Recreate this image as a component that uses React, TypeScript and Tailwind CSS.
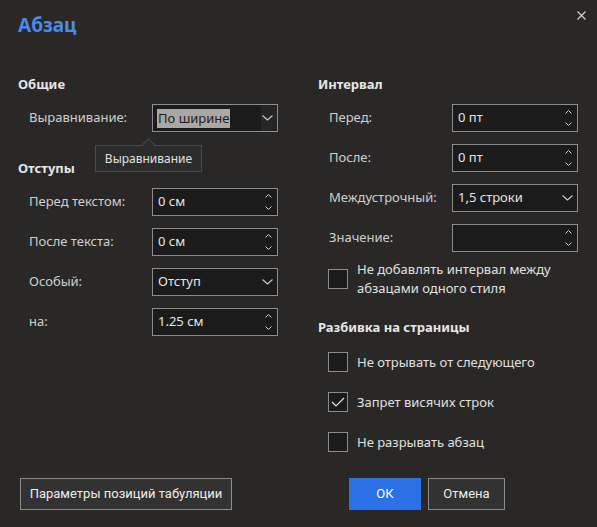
import React from "react";

const font = { fontFamily: '"Noto Sans", "Open Sans", sans-serif' };
const btnFont = { fontFamily: 'Roboto, "Noto Sans", sans-serif' };

function Chevron() {
  return (
    <svg width="11" height="6" viewBox="0 0 11 6" className="text-[#cfcfcf]">
      <path d="M0.5 0.5 L5.5 5 L10.5 0.5" fill="none" stroke="currentColor" strokeWidth="1.1" />
    </svg>
  );
}

function Spinner() {
  return (
    <div className="flex h-full flex-col justify-between py-[5px] pr-[5px] text-[#cfcfcf]">
      <svg width="7" height="4" viewBox="0 0 7 4">
        <path d="M0.5 3.5 L3.5 0.5 L6.5 3.5" fill="none" stroke="currentColor" strokeWidth="1" />
      </svg>
      <svg width="7" height="4" viewBox="0 0 7 4">
        <path d="M0.5 0.5 L3.5 3.5 L6.5 0.5" fill="none" stroke="currentColor" strokeWidth="1" />
      </svg>
    </div>
  );
}

function SpinField({ value }: { value: string }) {
  return (
    <div className="flex h-[28px] w-[126px] items-stretch border border-[#8c8c8c] bg-[#1c1b1b]">
      <div className="flex flex-1 items-center pl-[5px] text-[13px] text-[#e4e4e4]">{value}</div>
      <Spinner />
    </div>
  );
}

function SelectField({ value, focused }: { value: string; focused?: boolean }) {
  return (
    <div className="flex h-[28px] w-[126px] items-stretch border border-[#8c8c8c] bg-[#1c1b1b]">
      <div className="flex flex-1 items-center pl-[4px] text-[13px]">
        {focused ? (
          <span className="bg-[#aaa7a4] px-[1px] leading-[19px] text-[#1e1e1e]">{value}</span>
        ) : (
          <span className="pl-[1px] text-[#e4e4e4]">{value}</span>
        )}
      </div>
      <div className={`flex w-[16px] items-center justify-center pr-[3px] ${focused ? "bg-[#252525]" : ""}`}>
        <Chevron />
      </div>
    </div>
  );
}

function Row({ label, children }: { label: string; children: React.ReactNode }) {
  return (
    <div className="flex h-[28px] items-center">
      <div className="w-[134px] pl-[11px] text-[13px] text-[#cfcfcf]">{label}</div>
      {children}
    </div>
  );
}

function Header({ children }: { children: React.ReactNode }) {
  return <div className="flex h-[20px] items-center text-[13px] font-bold text-[#e6e6e6]">{children}</div>;
}

function Check({ checked, children }: { checked?: boolean; children: React.ReactNode }) {
  return (
    <div className="flex items-center pl-[10px]">
      <div className="flex h-[20px] w-[20px] shrink-0 items-center justify-center border border-[#8c8c8c] bg-[#1c1b1b]">
        {checked && (
          <svg width="14" height="10" viewBox="0 0 14 10" className="text-[#e4e4e4]">
            <path d="M1 5 L5 9 L13 1" fill="none" stroke="currentColor" strokeWidth="1.2" />
          </svg>
        )}
      </div>
      <div className="ml-[9px] text-[13px] leading-[19px] text-[#e0e0e0]">{children}</div>
    </div>
  );
}

export default function App() {
  return (
    <div style={font} className="relative flex h-[527px] w-[597px] flex-col bg-[#292827] px-[18px]">
      <svg width="9" height="9" viewBox="0 0 9 9" className="absolute right-[11px] top-[11px] text-[#d0d0d0]">
        <path d="M0.5 0.5 L8.5 8.5 M8.5 0.5 L0.5 8.5" stroke="currentColor" strokeWidth="1.2" />
      </svg>
      <div className="mt-[11px] flex items-center">
        <h1 className="text-[19px] font-bold leading-[28px] text-[#4a8aea]">Абзац</h1>
      </div>

      <div className="mt-[36px] flex gap-[40px]">
        <div className="relative flex w-[260px] flex-col">
          <Header>Общие</Header>
          <div className="mt-[9px]">
            <Row label="Выравнивание:">
              <SelectField value="По ширине" focused />
            </Row>
          </div>
          <div className="mt-[27px]">
            <Header>Отступы</Header>
          </div>
          <div className="mt-[9px] flex flex-col gap-[12px]">
            <Row label="Перед текстом:">
              <SpinField value="0 см" />
            </Row>
            <Row label="После текста:">
              <SpinField value="0 см" />
            </Row>
            <Row label="Особый:">
              <SelectField value="Отступ" />
            </Row>
            <Row label="на:">
              <SpinField value="1.25 см" />
            </Row>
          </div>

          <div className="absolute left-[77px] top-[70px] z-10">
            <div className="absolute left-[49px] top-[-5px] h-[9px] w-[9px] rotate-45 border-l border-t border-[#4a4a4a] bg-[#2c2c2c]" />
            <div className="flex h-[27px] w-[107px] items-center justify-center border border-[#4a4a4a] bg-[#2c2c2c] text-[12px] text-[#e0e0e0]">
              Выравнивание
            </div>
          </div>
        </div>

        <div className="flex w-[260px] flex-col">
          <Header>Интервал</Header>
          <div className="mt-[9px] flex flex-col gap-[12px]">
            <Row label="Перед:">
              <SpinField value="0 пт" />
            </Row>
            <Row label="После:">
              <SpinField value="0 пт" />
            </Row>
            <Row label="Междустрочный:">
              <SelectField value="1,5 строки" />
            </Row>
            <Row label="Значение:">
              <SpinField value="" />
            </Row>
          </div>
          <div className="mt-[8px]">
            <Check>
              Не добавлять интервал между
              <br />
              абзацами одного стиля
            </Check>
          </div>
          <div className="mt-[20px]">
            <Header>Разбивка на страницы</Header>
          </div>
          <div className="mt-[10px] flex flex-col gap-[12px]">
            <div className="flex h-[28px] items-center">
              <Check>Не отрывать от следующего</Check>
            </div>
            <div className="flex h-[28px] items-center">
              <Check checked>Запрет висячих строк</Check>
            </div>
            <div className="flex h-[28px] items-center">
              <Check>Не разрывать абзац</Check>
            </div>
          </div>
        </div>
      </div>

      <div style={btnFont} className="mb-[17px] mt-auto flex items-center">
        <button className="ml-[2px] h-[32px] w-[212px] border border-[#8c8c8c] bg-[#333232] text-[13px] text-[#ececec]">
          Параметры позиций табуляции
        </button>
        <button className="ml-auto h-[32px] w-[72px] bg-[#2b70e4] text-[13px] text-white">ОК</button>
        <button className="ml-[7px] mr-[74px] h-[32px] w-[77px] border border-[#8c8c8c] bg-[#333232] text-[13px] text-[#ececec]">
          Отмена
        </button>
      </div>
    </div>
  );
}
